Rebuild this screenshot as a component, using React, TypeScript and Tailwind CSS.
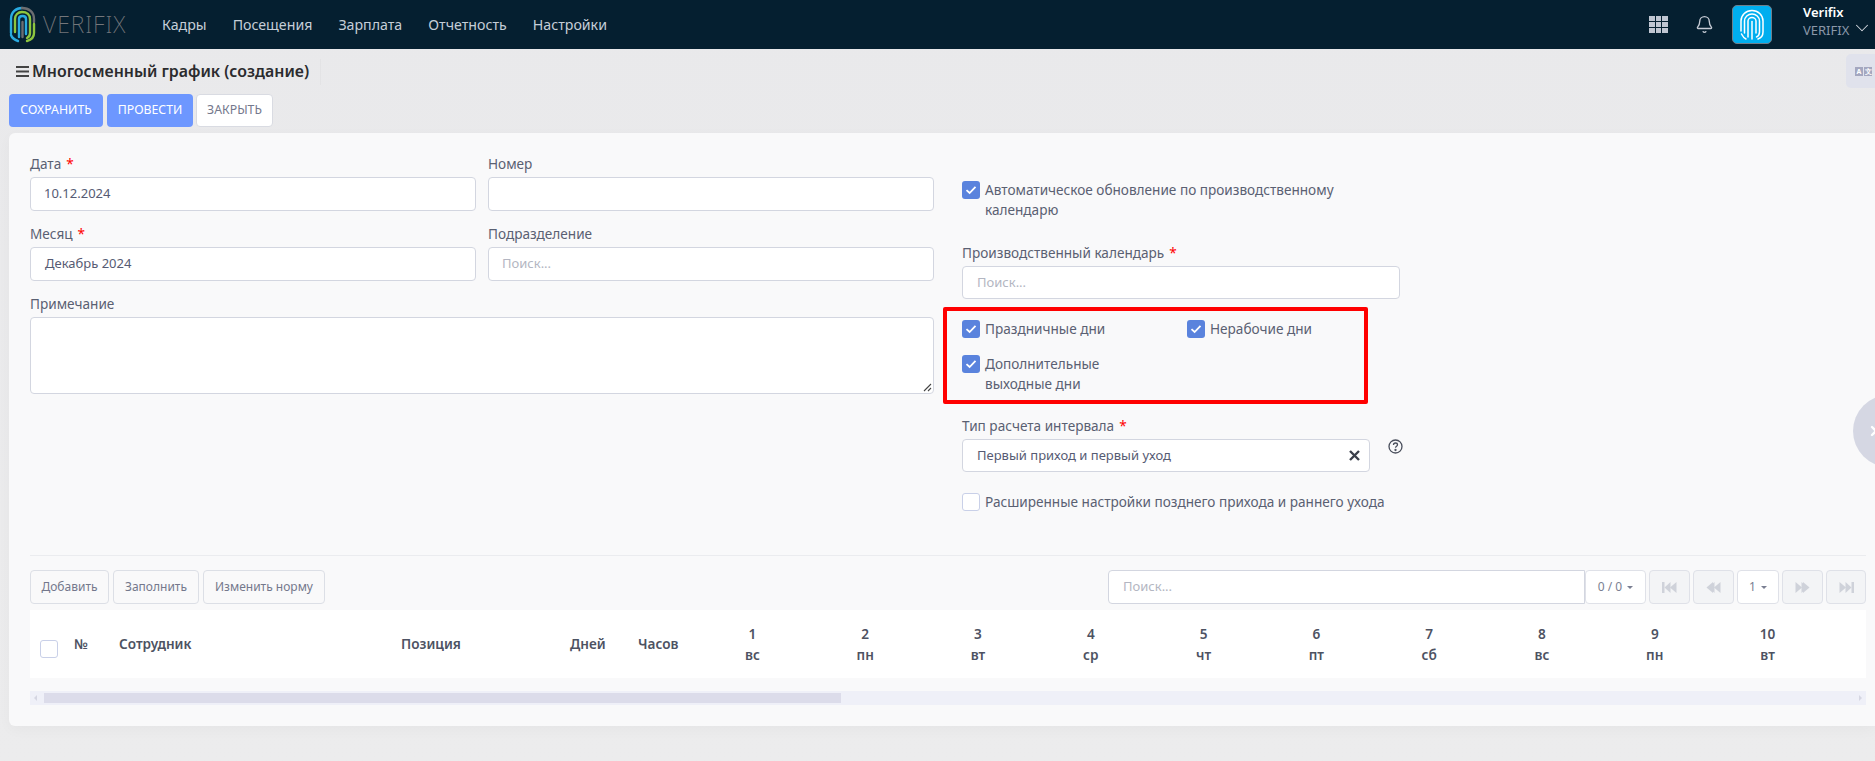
import React from "react";
import { ChevronDown, Bell, X } from "lucide-react";

const FONT = "[font-family:'Noto_Sans',sans-serif]";

function Star() {
  return <span className="text-[#f00] ml-[5px]">*</span>;
}

function Label({ children, req }: { children: React.ReactNode; req?: boolean }) {
  return (
    <div className="h-5 leading-5 text-[13.6px] text-[#5a6072]">
      {children}
      {req && <Star />}
    </div>
  );
}

function Box({ value, placeholder, pl = "pl-[13px]" }: { value?: string; placeholder?: string; pl?: string }) {
  return (
    <div className={`h-[34px] mt-[3px] bg-white border border-[#d3d6e0] rounded-[4px] ${pl} flex items-center text-[13px]`}>
      {value ? <span className="text-[#565b73]">{value}</span> : <span className="text-[#b3b6c2]">{placeholder}</span>}
    </div>
  );
}

function Check({ checked = true }: { checked?: boolean }) {
  return checked ? (
    <span className="w-[18px] h-[18px] shrink-0 rounded-[3px] bg-[#5a83dd] flex items-center justify-center">
      <svg width="12" height="10" viewBox="0 0 12 10" fill="none">
        <path d="M1.5 5.2 L4.6 8 L10.5 1.8" stroke="#fff" strokeWidth="1.8" />
      </svg>
    </span>
  ) : (
    <span className="block w-[18px] h-[18px] shrink-0 rounded-[3px] bg-white border border-[#c9d0e8]" />
  );
}

function CheckRow({ children, checked, className = "" }: { children: React.ReactNode; checked?: boolean; className?: string }) {
  return (
    <div className={`flex gap-[5px] text-[13.6px] leading-[20px] text-[#5a6072] ${className}`}>
      <Check checked={checked} />
      <div className="-mt-[1px]">{children}</div>
    </div>
  );
}

function PageBtn({ children, enabled, w }: { children: React.ReactNode; enabled?: boolean; w: string }) {
  return (
    <div className={`${w} h-[34px] rounded-[4px] border border-[#dfe1e8] flex items-center justify-center text-[12px] ${enabled ? "bg-white text-[#7a7f92]" : "bg-[#f3f4f6] text-[#cfd2da]"}`}>
      {children}
    </div>
  );
}

function Caret() {
  return <span className="ml-[5px] w-0 h-0 border-x-[3px] border-x-transparent border-t-[3px] border-t-[#7a7f92]" />;
}

function Skip({ dir, end }: { dir: "l" | "r"; end?: boolean }) {
  return (
    <svg width="15" height="13" viewBox="0 0 15 13" fill="#cfd2da" className={dir === "r" ? "-scale-x-100" : ""}>
      {end ? <rect x="0" y="1" width="2.5" height="11" /> : <path d="M0.5 6.5 L7 1 V12 Z" />}
      <path d="M2.5 6.5 L8.5 1 V12 Z" />
      <path d="M8 6.5 L14.5 1 V12 Z" />
    </svg>
  );
}

function OutlineBtn({ children, w }: { children: React.ReactNode; w: string }) {
  return (
    <div className={`${w} h-[34px] rounded-[4px] border border-[#dcdfe6] flex items-center justify-center text-[12px] text-[#74788c]`}>
      {children}
    </div>
  );
}

function Logo() {
  return (
    <svg width="27" height="37" viewBox="0 0 27 37" fill="none" strokeLinecap="round" strokeWidth="2.4">
      <path d="M2 27 V13 C2 6 7 2 13 2" stroke="#29abe2" />
      <path d="M13 2 C20 2 25 6 25 13 V16" stroke="#6d6e71" />
      <path d="M25 18 V27 C25 31 22 34 18 35" stroke="#8dc63f" />
      <path d="M2 29 C3 32 6 34 9 35" stroke="#29abe2" />
      <path d="M6 26 V13 C6 9 9 6 13 6 C18 6 21 9 21 13 V27 C21 29 20 31 18 32" stroke="#8dc63f" />
      <path d="M10 31 V13 C10 11 11 10 13.5 10 C16 10 17 11 17 13 V28" stroke="#29abe2" />
      <path d="M13.5 16 V31" stroke="#6d6e71" />
    </svg>
  );
}

function WhitePrint() {
  return (
    <svg width="26" height="32" viewBox="0 0 26 32" fill="none" stroke="#fff" strokeWidth="1.5" strokeLinecap="round">
      <path d="M2 22 V12 C2 6 7 1.5 13 1.5 C19 1.5 24 6 24 12 V23 C24 26 22 29 19 30" />
      <path d="M2.5 25 C3.5 27 5 29 7 30" />
      <path d="M5.5 24 V12 C5.5 8 9 5 13 5 C17 5 20.5 8 20.5 12 V23 C20.5 25 19.5 27 17.5 28" />
      <path d="M9 28 V12 C9 10 11 8.5 13 8.5 C15 8.5 17 10 17 12 V24" />
      <path d="M13 12.5 V30" />
    </svg>
  );
}

const days = ["вс", "пн", "вт", "ср", "чт", "пт", "сб", "вс", "пн", "вт"];

export default function App() {
  return (
    <div className={`${FONT} relative w-[1875px] h-[761px] overflow-hidden bg-gradient-to-b from-[#e9e9eb] to-[#ececed]`}>
      {/* Header */}
      <header className="h-[49px] bg-[#051f30] flex items-center">
        <div className="ml-[9px] w-[27px]"><Logo /></div>
        <span className="ml-[7px] w-[119px] text-[23px] font-extralight tracking-[1px] text-[#74767a]">VERIFIX</span>
        <nav className="flex gap-[26px] text-[14.2px] text-[#c5ced8]">
          <span>Кадры</span>
          <span>Посещения</span>
          <span>Зарплата</span>
          <span>Отчетность</span>
          <span>Настройки</span>
        </nav>
        <div className="ml-auto flex items-center">
          <div className="grid grid-cols-3 gap-[1px] w-[19px]">
            {Array.from({ length: 9 }).map((_, i) => (
              <span key={i} className="h-[5px] bg-[#c0c6d2]" />
            ))}
          </div>
          <Bell className="ml-[27px] text-[#c5cad4]" size={19} strokeWidth={1.7} />
          <div className="ml-[18px] w-[40px] h-[39px] rounded-[5px] bg-[#00aeef] border border-[#6f7f8c] flex items-center justify-center">
            <WhitePrint />
          </div>
          <div className="ml-[31px] w-[48px] -mt-[6px] leading-[17.5px]">
            <div className="text-[13px] font-semibold text-white">Verifix</div>
            <div className="text-[13px] text-[#8a97a8]">VERIFIX</div>
          </div>
          <ChevronDown className="mt-[7px] mr-[2px] text-[#d5d9e0]" size={22} strokeWidth={1.1} />
        </div>
      </header>

      {/* Title */}
      <div className="h-[45px] flex items-center pl-[16px]">
        <svg width="13" height="11" viewBox="0 0 13 11" fill="#444"><rect y="0" width="13" height="2" /><rect y="4.5" width="13" height="2" /><rect y="9" width="13" height="2" /></svg>
        <span className="ml-[3px] pr-[11px] h-[26px] leading-[25px] border-r border-[#e3e3e5] text-[15.9px] font-semibold text-[#2b2b2e]">Многосменный график (создание)</span>
      </div>

      {/* Actions */}
      <div className="h-[33px] pl-[9px] flex text-[12.3px]">
        <div className="w-[94px] rounded-[4px] bg-[#6d97ff] text-white flex items-center justify-center">СОХРАНИТЬ</div>
        <div className="ml-[4px] w-[86px] rounded-[4px] bg-[#6d97ff] text-white flex items-center justify-center">ПРОВЕСТИ</div>
        <div className="ml-[3px] w-[77px] rounded-[4px] bg-white border border-[#d9dbe2] text-[#74788c] flex items-center justify-center">ЗАКРЫТЬ</div>
      </div>

      {/* Panel */}
      <main className="mt-[6px] ml-[9px] h-[593px] bg-[#f9f9fa] rounded-l-[6px] pl-[21px] pr-[9px] pt-[21px] shadow-[0_4px_14px_rgba(0,0,0,0.03)]">
        <div className="h-[402px] border-b border-[#ebecef] flex">
          <div className="w-[904px] shrink-0 grid grid-cols-[446px_446px] gap-x-[12px] gap-y-[13px] content-start">
            <div><Label req>Дата</Label><Box value="10.12.2024" /></div>
            <div><Label>Номер</Label><Box /></div>
            <div><Label req>Месяц</Label><Box value="Декабрь 2024" pl="pl-[14px]" /></div>
            <div><Label>Подразделение</Label><Box placeholder="Поиск..." /></div>
            <div className="col-span-2 relative">
              <Label>Примечание</Label>
              <div className="mt-[3px] h-[77px] bg-white border border-[#d3d6e0] rounded-[4px]" />
              <svg className="absolute right-[2px] bottom-[2px]" width="9" height="9" viewBox="0 0 9 9" stroke="#444" strokeWidth="1.1"><path d="M1 8 L8 1 M5 8 L8 5" /></svg>
            </div>
          </div>

          <div className="ml-[28px] w-[438px] shrink-0">
            <CheckRow className="mt-[27px] w-[400px]">Автоматическое обновление по производственному календарю</CheckRow>
            <div className="mt-[23px] leading-5 text-[13.6px] text-[#5a6072]">Производственный календарь<Star /></div>
            <div className="mt-[3px] h-[33px] bg-white border border-[#d3d6e0] rounded-[4px] pl-[14px] flex items-center text-[13px] text-[#b3b6c2]">Поиск...</div>

            <div className="mt-[8px] -ml-[19px] w-[425px] h-[97px] border-[4px] border-[#f00] rounded-[2px] pl-[15px] pt-[9px]">
              <div className="flex">
                <CheckRow className="w-[225px]">Праздничные дни</CheckRow>
                <CheckRow>Нерабочие дни</CheckRow>
              </div>
              <CheckRow className="mt-[16px] w-[160px]">Дополнительные выходные дни</CheckRow>
            </div>

            <div className="mt-[12px] leading-5 text-[13.6px] text-[#5a6072]">Тип расчета интервала<Star /></div>
            <div className="flex">
              <div className="mt-[3px] w-[408px] shrink-0 h-[33px] bg-white border border-[#d3d6e0] rounded-[4px] pl-[14px] pr-[9px] flex items-center justify-between text-[13px] text-[#565b73]">
                <span>Первый приход и первый уход</span>
                <svg width="11" height="11" viewBox="0 0 11 11" stroke="#3a3f4a" strokeWidth="2.4"><path d="M1 1 L10 10 M10 1 L1 10" /></svg>
              </div>
              <svg className="ml-[18px] mt-[3px] shrink-0" width="15" height="15" viewBox="0 0 15 15" fill="none" stroke="#4a4f5c" strokeWidth="1.3">
                <circle cx="7.5" cy="7.5" r="6.5" />
                <path d="M5.5 6 C5.5 4.6 6.5 4 7.5 4 C8.7 4 9.5 4.8 9.5 5.8 C9.5 7.2 7.5 7.2 7.5 8.8" />
                <circle cx="7.5" cy="11" r="0.5" />
              </svg>
            </div>
            <CheckRow checked={false} className="mt-[21px]">Расширенные настройки позднего прихода и раннего ухода</CheckRow>
          </div>
        </div>

        {/* Toolbar */}
        <div className="mt-[14px] flex">
          <div className="flex gap-[4px]">
            <OutlineBtn w="w-[79px]">Добавить</OutlineBtn>
            <OutlineBtn w="w-[86px]">Заполнить</OutlineBtn>
            <OutlineBtn w="w-[122px]">Изменить норму</OutlineBtn>
          </div>
          <div className="ml-auto flex">
            <div className="w-[477px] h-[34px] bg-white border border-[#d3d6e0] rounded-l-[4px] pl-[14px] flex items-center text-[13px] text-[#b3b6c2]">Поиск...</div>
            <div className="flex gap-[3px]">
              <PageBtn enabled w="w-[61px]">0 / 0<Caret /></PageBtn>
              <PageBtn w="w-[41px]"><Skip dir="l" end /></PageBtn>
              <PageBtn w="w-[41px]"><Skip dir="l" /></PageBtn>
              <PageBtn enabled w="w-[42px]">1<Caret /></PageBtn>
              <PageBtn w="w-[41px]"><Skip dir="r" /></PageBtn>
              <PageBtn w="w-[40px]"><Skip dir="r" end /></PageBtn>
            </div>
          </div>
        </div>

        {/* Table head */}
        <div className="mt-[6px] h-[68px] bg-white flex items-center text-[13.6px] font-semibold text-[#4d5262]">
          <div className="w-[44px] pl-[10px] pt-[9px]"><Check checked={false} /></div>
          <div className="w-[45px]">№</div>
          <div className="w-[282px]">Сотрудник</div>
          <div className="w-[169px]">Позиция</div>
          <div className="w-[68px]">Дней</div>
          <div className="w-[58px]">Часов</div>
          {days.map((d, i) => (
            <div key={i} className="w-[112.8px] shrink-0 text-center leading-[21px]">
              <div>{i + 1}</div>
              <div>{d}</div>
            </div>
          ))}
        </div>

        {/* Scrollbar */}
        <div className="mt-[13px] h-[14px] bg-[#eff0f8] flex items-center relative">
          <span className="ml-[4px] w-0 h-0 border-y-[3px] border-y-transparent border-r-[3px] border-r-[#d5d6e2]" />
          <div className="ml-[7px] w-[797px] h-[10px] bg-[#dcdcea]" />
          <span className="absolute right-[4px] w-0 h-0 border-y-[3px] border-y-transparent border-l-[3px] border-l-[#d5d6e2]" />
        </div>
      </main>

      {/* Overlays */}
      <div className="absolute right-0 top-[54px] w-[29px] h-[34px] rounded-l-[5px] bg-[#e0e2ec] flex items-center pl-[9px] gap-[1px]">
        <span className="w-[8px] h-[9px] bg-[#a4a7bf] text-white text-[7px] leading-[9px] text-center font-bold">A</span>
        <span className="w-[8px] h-[9px] bg-[#a4a7bf] text-white text-[7px] leading-[9px] text-center font-bold">文</span>
      </div>
      <div className="absolute left-[1853px] top-[395px] w-[72px] h-[72px] rounded-full bg-[#d5d7e3] flex items-center pl-[15px]">
        <X className="text-white shrink-0" size={16} strokeWidth={3.5} />
      </div>
    </div>
  );
}
